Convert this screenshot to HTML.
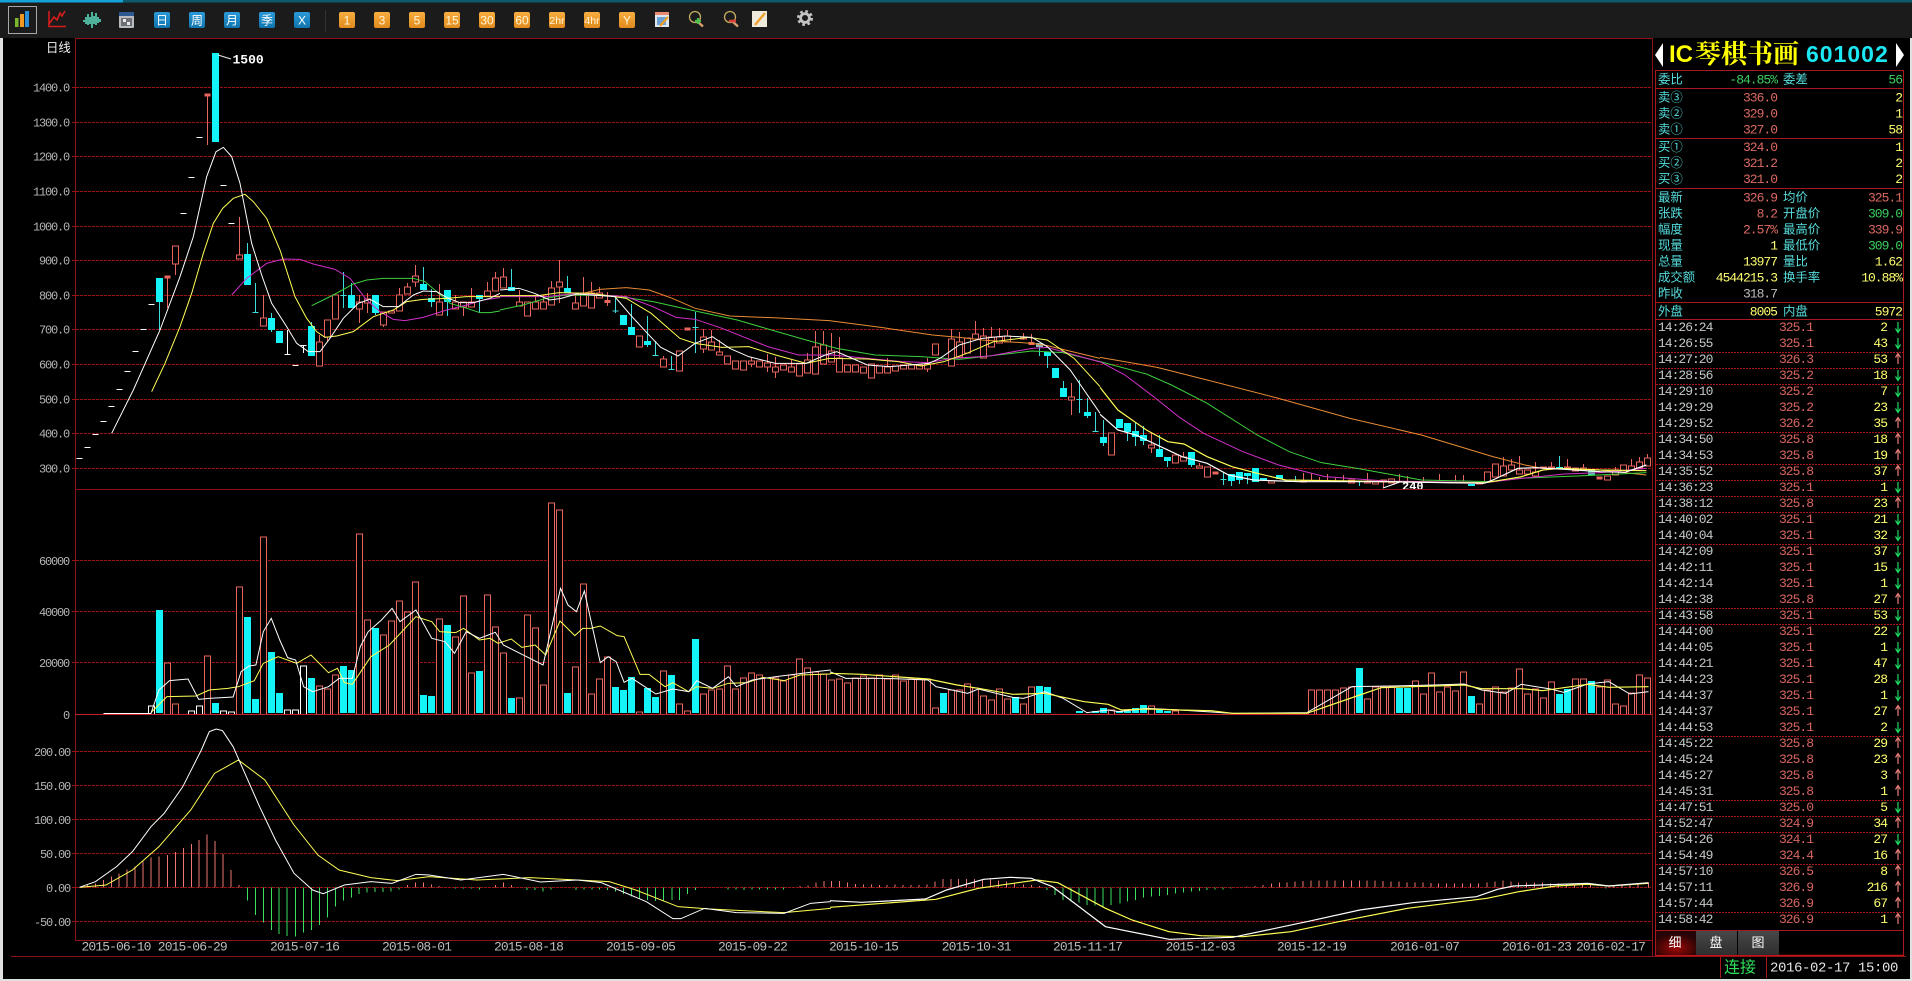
<!DOCTYPE html>
<html lang="zh"><head><meta charset="utf-8"><title>IC琴棋书画 601002</title>
<style>
html,body{margin:0;padding:0;background:#000;overflow:hidden}
svg{display:block}
path,polyline,line{vector-effect:non-scaling-stroke;fill:none}
.c path{shape-rendering:crispEdges}
text{white-space:pre}
.a{font:12px "Liberation Mono",monospace;letter-spacing:-1.2px;fill:#b4b4b4;text-anchor:end}
.dt{font:13px "Liberation Mono",monospace;letter-spacing:-.9px;fill:#bdbdbd}
.l{font:12.4px "Liberation Sans","Noto Sans CJK SC",sans-serif;fill:#55dcdc}
.m{font:13px "Liberation Mono",monospace;letter-spacing:-1px}
.e{text-anchor:end}
.s{fill:#dd6a64}.g{fill:#3cd060}.y{fill:#ffff70}.h{fill:#bdbdbd}
.t{font:13px "Liberation Mono",monospace;letter-spacing:-1px;fill:#c4c8c8}
.p{font:13px "Liberation Mono",monospace;letter-spacing:-1px;fill:#d86660}
.q{font:13px "Liberation Mono",monospace;letter-spacing:-1px;fill:#ffff70;text-anchor:end}
.tb{font:12px "Liberation Sans","Noto Sans CJK SC",sans-serif;fill:#fff;text-anchor:middle}
.gd{stroke:#9a1212;stroke-width:1;stroke-dasharray:3 1}
.rd{stroke:#a8181c;stroke-width:1}
</style></head><body>
<svg width="1912" height="981" viewBox="0 0 1912 981" xmlns="http://www.w3.org/2000/svg">
<defs>
<linearGradient id="bl" x1="0" y1="0" x2="0" y2="1"><stop offset="0" stop-color="#2a9ad8"/><stop offset="1" stop-color="#0f74ae"/></linearGradient>
<linearGradient id="or" x1="0" y1="0" x2="0" y2="1"><stop offset="0" stop-color="#f8ae40"/><stop offset="1" stop-color="#e08a1c"/></linearGradient>
<radialGradient id="rt" cx=".5" cy=".7" r=".6"><stop offset="0" stop-color="#a00606"/><stop offset="1" stop-color="#240404"/></radialGradient>
<linearGradient id="gt" x1="0" y1="0" x2="0" y2="1"><stop offset="0" stop-color="#484848"/><stop offset="1" stop-color="#2e2e2e"/></linearGradient>
<path id="d" d="M1898-5V5M1895.5 1.5L1898 5.5 1900.5 1.5" stroke="#22d864" stroke-width="1.2"/>
<path id="u" d="M1898 5V-5M1895.5-1.5L1898-5.5 1900.5-1.5" stroke="#e87c78" stroke-width="1.2"/>
</defs>
<rect width="1912" height="981" fill="#000"/>
<rect x="0" y="0" width="3" height="981" fill="#e0e0e0"/>
<rect x="1910" y="0" width="2" height="981" fill="#e0e0e0"/>
<rect x="0" y="979" width="1912" height="2" fill="#e0e0e0"/>
<!-- toolbar -->
<rect x="0" y="0" width="1912" height="38" fill="#1b1b1b"/>
<rect x="0" y="0" width="1912" height="2.5" fill="#0c5a6c"/>
<rect x="0" y="0" width="123" height="2.5" fill="#12a4d8"/>
<rect x="8.5" y="6.5" width="28" height="27" fill="none" stroke="#a8a8a8"/>
<rect x="15" y="18" width="3.5" height="9" fill="#7cb82c"/><rect x="20" y="14" width="4" height="13" fill="#f09a20"/><rect x="25" y="11" width="4" height="16" fill="#2a8ed8"/>
<path d="M49 11V26.5H66M49 24L54 17 57 20 60 13 62 16 65 11" stroke="#d41c1c" stroke-width="1.6"/>
<path d="M84 20v2M86 17v7M88 14v11M90 17v7M92 12v16M94 16v8M96 13v12M98 17v6M100 19v3" stroke="#5fe4c4" stroke-width="1.5"/>
<rect x="119" y="12" width="15" height="16" rx="1" fill="#b8bcc0"/><rect x="119" y="12" width="15" height="4" fill="#2c5a90"/><rect x="121" y="18" width="11" height="8" fill="#6c7074"/><rect x="123" y="19" width="3" height="3" fill="#e8e8e8"/><rect x="127" y="22" width="3" height="3" fill="#e8e8e8"/>
<g fill="url(#bl)"><rect x="154" y="12" width="16" height="16" rx="2"/><rect x="189" y="12" width="16" height="16" rx="2"/><rect x="224" y="12" width="16" height="16" rx="2"/><rect x="259" y="12" width="16" height="16" rx="2"/><rect x="294" y="12" width="16" height="16" rx="2"/></g>
<text class="tb" x="162" y="24.5">日</text><text class="tb" x="197" y="24.5">周</text><text class="tb" x="232" y="24.5">月</text><text class="tb" x="267" y="24.5">季</text><text class="tb" x="302" y="24.5">X</text>
<line x1="325.5" y1="10" x2="325.5" y2="32" stroke="#333"/>
<g fill="url(#or)"><rect x="339" y="12" width="16" height="16" rx="2"/><rect x="374" y="12" width="16" height="16" rx="2"/><rect x="409" y="12" width="16" height="16" rx="2"/><rect x="444" y="12" width="16" height="16" rx="2"/><rect x="479" y="12" width="16" height="16" rx="2"/><rect x="514" y="12" width="16" height="16" rx="2"/><rect x="549" y="12" width="16" height="16" rx="2"/><rect x="584" y="12" width="16" height="16" rx="2"/><rect x="619" y="12" width="16" height="16" rx="2"/></g>
<g class="tb" style="fill:#fff6d8"><text class="tb" x="347" y="24.5" style="fill:#fff6d8">1</text><text class="tb" x="382" y="24.5" style="fill:#fff6d8">3</text><text class="tb" x="417" y="24.5" style="fill:#fff6d8">5</text><text class="tb" x="452" y="24.5" style="fill:#fff6d8">15</text><text class="tb" x="487" y="24.5" style="fill:#fff6d8">30</text><text class="tb" x="522" y="24.5" style="fill:#fff6d8">60</text><text class="tb" x="557" y="24" style="fill:#fff6d8;font-size:10.5px">2hr</text><text class="tb" x="592" y="24" style="fill:#fff6d8;font-size:10.5px">4hr</text><text class="tb" x="627" y="24.5" style="fill:#fff6d8">Y</text></g>
<rect x="655" y="12" width="14" height="15" fill="#dfe6ee"/><rect x="655" y="12" width="14" height="3" fill="#e88a70"/><rect x="657" y="17" width="9" height="8" fill="#6ca0d8"/><path d="M660 26L668 17" stroke="#f0a020" stroke-width="2.2"/>
<circle cx="695" cy="17" r="5.5" fill="none" stroke="#c4ac60" stroke-width="1.3"/><path d="M698 22L703 26.5" stroke="#d4a070" stroke-width="2.4"/><path d="M695 21h6M698 18v6" stroke="#46c04a" stroke-width="2.2"/>
<circle cx="730" cy="17" r="5.5" fill="none" stroke="#c4ac60" stroke-width="1.3"/><path d="M733 22L738 26.5" stroke="#d4a070" stroke-width="2.4"/><path d="M729 21h7" stroke="#d8403c" stroke-width="2.6"/>
<rect x="752" y="11" width="15" height="16" fill="#eeeadc"/><path d="M755 25L765 13" stroke="#f0a030" stroke-width="2.4"/>
<circle cx="805" cy="18" r="6.6" fill="none" stroke="#c4c4c4" stroke-width="2.8" stroke-dasharray="2.6 2.6"/><circle cx="805" cy="18" r="4.4" fill="none" stroke="#c4c4c4" stroke-width="2.8"/>
<!-- grid -->
<line x1="75" y1="38.5" x2="1653" y2="38.5" stroke="#8a1418"/>
<line x1="75.5" y1="39" x2="75.5" y2="941" stroke="#8a1418"/>
<line x1="1652.5" y1="39" x2="1652.5" y2="956" stroke="#8a1418"/>
<path class="gd" d="M72 87.5H1652M72 122.5H1652M72 156.5H1652M72 191.5H1652M72 226.5H1652M72 260.5H1652M72 295.5H1652M72 329.5H1652M72 364.5H1652M72 399.5H1652M72 433.5H1652M72 468.5H1652M72 560.5H1652M72 611.5H1652M72 662.5H1652M72 751.5H1652M72 785.5H1652M72 819.5H1652M72 853.5H1652M72 887.5H1652M72 921.5H1652"/>
<path stroke="#8a1418" d="M75 489.5H1652M75 940.5H1653M11 956.5H1906"/>
<path stroke="#c02428" stroke-width="1" d="M75 714.5H1652"/>
<!-- axis labels -->
<text class="a" x="69" y="91.5">1400.0</text><text class="a" x="69" y="126.5">1300.0</text><text class="a" x="69" y="160.5">1200.0</text><text class="a" x="69" y="195.5">1100.0</text><text class="a" x="69" y="230.5">1000.0</text><text class="a" x="69" y="264.5">900.0</text><text class="a" x="69" y="299.5">800.0</text><text class="a" x="69" y="333.5">700.0</text><text class="a" x="69" y="368.5">600.0</text><text class="a" x="69" y="403.5">500.0</text><text class="a" x="69" y="437.5">400.0</text><text class="a" x="69" y="472.5">300.0</text>
<text class="a" x="69" y="565">60000</text><text class="a" x="69" y="616">40000</text><text class="a" x="69" y="667">20000</text><text class="a" x="69" y="719">0</text>
<text class="a" x="70" y="756">200.00</text><text class="a" x="70" y="790">150.00</text><text class="a" x="70" y="824">100.00</text><text class="a" x="70" y="858">50.00</text><text class="a" x="70" y="892">0.00</text><text class="a" x="70" y="926">-50.00</text>
<text x="46" y="52" style="font:12.4px 'Noto Sans CJK SC',sans-serif;fill:#f0f0f0">日线</text>
<text class="dt" x="81.5" y="950.5">2015-06-10</text><text class="dt" x="157.8" y="950.5">2015-06-29</text><text class="dt" x="270" y="950.5">2015-07-16</text><text class="dt" x="382" y="950.5">2015-08-01</text><text class="dt" x="494" y="950.5">2015-08-18</text><text class="dt" x="606" y="950.5">2015-09-05</text><text class="dt" x="718" y="950.5">2015-09-22</text><text class="dt" x="829" y="950.5">2015-10-15</text><text class="dt" x="941.7" y="950.5">2015-10-31</text><text class="dt" x="1053" y="950.5">2015-11-17</text><text class="dt" x="1165.6" y="950.5">2015-12-03</text><text class="dt" x="1277" y="950.5">2015-12-19</text><text class="dt" x="1390" y="950.5">2016-01-07</text><text class="dt" x="1502" y="950.5">2016-01-23</text><text class="dt" x="1576" y="950.5">2016-02-17</text>
<!-- candles: x = bar index -->
<g class="c" transform="translate(79.5 0) scale(8 1)">
<path stroke="#fff" stroke-width="1" d="M-.4 458.5h.8M.6 447.5h.8M1.6 434.5h.8M2.6 421.5h.8M3.6 406.5h.8M4.6 389.5h.8M5.6 371.5h.8M6.6 351.5h.8M7.6 329.5h.8M8.6 304.5h.8M12.6 213.5h.8M13.6 177.5h.8M14.6 137.5h.8M17.6 185.5h.8M18.6 223.5h.8M25.6 354.5h.8M26.6 365.5h.8M27.6 345.5h.8M26 330V354M28 345V353"/>
<path stroke="#e8665e" stroke-width="1" d="M11 277V308M12 264V275M16 95V145M20 217V255M23 295V318M30 335V342M31 337V341M35 295V323M36 293V313M38 325V327M40 288V295M41 283V287M42 265V287M45 284V302M47 295V302M48 307V316M49 288V302M51 282V296M52 272V278M53 268V277M55 290V302M57 295V302M58 295V302M59 281V288M60 260V303M62 295V303M63 277V293M64 282V293M65 287V293M66 292V306M73 356V359M78 329V337M78 349V353M79 330V342M80 340V352M84 357V367M86 354V372M87 357V378M89 360V367M91 353V360M92 331V347M93 331V345M94 333V351M95 337V358M101 358V367M106 358V372M109 329V339M110 332V342M112 321V334M113 328V336M114 327V337M115 328V337M116 330V336M118 333V340M119 334V342M124 383V415M134 433V453M138 452V457M140 463V466M153 473V481M154 473V481M155 477V481M156 474V481M157 478V481M158 475V481M161 473V481M163 480V488M165 474V481M166 476V481M168 477V481M170 474V481M172 475V481M173 475V481M178 457V466M179 459V465M180 456V470M182 462V472M184 462V467M186 459V467M188 464V468M192 467V470M194 459V466M195 457V462M196 454V458"/>
<path stroke="#e8665e" stroke-width="3" d="M10.6 277h.8M15.6 95h.8M65.6 301.5h.8M75.6 329h.8M118.6 343.5h.8M141.6 473h.8M189.6 478h.8"/>
<path fill-rule="nonzero" style="fill:#000" stroke="#e8665e" stroke-width="1" d="M11.6 246h.8V264h-.8zM19.6 255h.8V259h-.8zM22.6 318h.8V326h-.8zM29.6 342h.8V366h-.8zM30.6 320h.8V337h-.8zM31.6 295h.8V319h-.8zM34.6 302h.8V309h-.8zM35.6 299h.8V303h-.8zM37.6 312h.8V325h-.8zM38.6 311h.8V313h-.8zM39.6 295h.8V311h-.8zM40.6 287h.8V294h-.8zM41.6 276h.8V282h-.8zM44.6 302h.8V315h-.8zM46.6 302h.8V309h-.8zM47.6 302h.8V307h-.8zM48.6 302h.8V307h-.8zM50.6 291h.8V296h-.8zM51.6 278h.8V291h-.8zM52.6 277h.8V288h-.8zM54.6 302h.8V306h-.8zM55.6 302h.8V316h-.8zM56.6 302h.8V309h-.8zM57.6 302h.8V309h-.8zM58.6 288h.8V305h-.8zM59.6 282h.8V287h-.8zM61.6 303h.8V309h-.8zM62.6 293h.8V306h-.8zM63.6 293h.8V308h-.8zM64.6 293h.8V298h-.8zM69.6 336h.8V347h-.8zM72.6 359h.8V367h-.8zM74.6 351h.8V371h-.8zM77.6 337h.8V349h-.8zM78.6 342h.8V350h-.8zM79.6 352h.8V355h-.8zM80.6 356h.8V364h-.8zM81.6 361h.8V369h-.8zM82.6 361h.8V370h-.8zM83.6 361h.8V364h-.8zM84.6 361h.8V367h-.8zM85.6 363h.8V367h-.8zM86.6 367h.8V372h-.8zM87.6 365h.8V370h-.8zM88.6 367h.8V372h-.8zM89.6 364h.8V376h-.8zM90.6 360h.8V373h-.8zM91.6 347h.8V374h-.8zM92.6 345h.8V364h-.8zM93.6 351h.8V362h-.8zM94.6 358h.8V372h-.8zM95.6 365h.8V372h-.8zM96.6 365h.8V372h-.8zM97.6 367h.8V373h-.8zM98.6 364h.8V378h-.8zM99.6 366h.8V373h-.8zM100.6 367h.8V373h-.8zM101.6 366h.8V371h-.8zM102.6 365h.8V369h-.8zM103.6 365h.8V369h-.8zM104.6 365h.8V369h-.8zM105.6 364h.8V369h-.8zM106.6 344h.8V355h-.8zM108.6 339h.8V366h-.8zM109.6 342h.8V357h-.8zM110.6 338h.8V353h-.8zM111.6 334h.8V339h-.8zM112.6 336h.8V358h-.8zM113.6 337h.8V347h-.8zM114.6 337h.8V343h-.8zM115.6 336h.8V342h-.8zM117.6 337h.8V339h-.8zM123.6 397h.8V400h-.8zM128.6 433h.8V455h-.8zM133.6 445h.8V448h-.8zM136.6 455h.8V463h-.8zM137.6 457h.8V461h-.8zM139.6 466h.8V468h-.8zM140.6 467h.8V477h-.8zM148.6 481h.8V483h-.8zM152.6 481h.8V482h-.8zM158.6 480h.8V483h-.8zM160.6 481h.8V483h-.8zM161.6 482h.8V484h-.8zM162.6 480h.8V482h-.8zM163.6 479h.8V483h-.8zM174.6 483h.8V484h-.8zM175.6 472h.8V482h-.8zM176.6 464h.8V477h-.8zM177.6 466h.8V476h-.8zM178.6 465h.8V470h-.8zM179.6 470h.8V474h-.8zM180.6 470h.8V474h-.8zM181.6 472h.8V476h-.8zM182.6 467h.8V468h-.8zM183.6 467h.8V468h-.8zM185.6 467h.8V468h-.8zM186.6 468h.8V471h-.8zM187.6 468h.8V470h-.8zM190.6 476h.8V480h-.8zM191.6 470h.8V475h-.8zM192.6 465h.8V472h-.8zM193.6 466h.8V470h-.8zM194.6 462h.8V468h-.8zM195.6 458h.8V466h-.8z"/>
<path stroke="#3fdcdc" stroke-width="1" d="M10 302V330M21 243V254M22 283V312M24 313V318M24 330V332M29 322V326M33 272V308M34 283V295M37 313V315M43 267V284M44 289V307M46 302V316M50 299V313M54 269V287M61 276V288M67 298V313M69 304V327M71 316V347M72 341V355M74 356V369M77 312V353M120 347V356M121 356V368M123 381V388M125 380V413M126 398V418M127 412V431M128 420V446M131 432V441M132 422V446M133 426V445M135 435V449M136 461V467M139 465V467M143 473V485M144 481V486M145 480V484M146 476V484M152 476V481M160 481V486M185 456V467M21.6 312.5h.8M32.6 295.5h.8M66.6 311h.8M71.6 355.5h.8M73.6 369.5h.8M76.6 327.5h.8M116.6 336.5h.8M124.6 399.5h.8M126.6 431.5h.8M142.6 479.5h.8M150.6 481.5h.8M151.6 481.5h.8"/>
<path stroke="#14f4f8" stroke-width="7" d="M10 278V302M17 53V142M21 254V285M24 318V330M25 331V343M29 326V356M34 295V308M37 295V313M43 284V290M44 298V302M46 290V302M50 295V299M54 287V291M61 288V293M68 315V325M69 327V335M71 341V345M121 352V356M122 368V378M123 388V397M126 412V416M128 437V443M130 419V428M131 423V432M132 431V437M133 435V441M135 449V457M136 457V461M139 452V465M144 474V481M145 472V480M146 473V476M147 468V482M148 478V480M150 475V479M174 484V486M185 467V469"/>
<path stroke="#8ab4b8" stroke-width="7" d="M120 343V347"/>
<path stroke="#30e8a0" stroke-width="7" d="M189 469V475"/>
</g>
<!-- moving averages -->
<g stroke-width="1">
<g transform="translate(0 30) scale(.33333)">
<polyline stroke="#d030c8" points="695,795 740,745 800,700 850,687 900,688 940,702 1005,718 1050,745 1100,810 1140,845 1180,868 1215,872 1270,862 1340,840 1400,825 1450,810 1500,803"/>
<polyline stroke="#3ecf3e" points="935,827 1000,795 1060,762 1100,750 1150,745 1240,745 1275,755 1310,785 1350,820 1400,835 1440,848 1470,848 1500,843"/>
<polyline stroke="#ffff55" points="455,1085 495,1000 540,890 575,790 610,670 640,580 668,535 700,505 735,493 760,515 800,565 840,660 885,800 920,865 950,905 975,922 1010,918 1060,905 1120,860 1180,840 1220,815 1270,808 1340,805 1400,800 1500,800"/>
<polyline stroke="#fff" points="335,1210 400,1080 480,900 540,740 580,620 620,440 648,365 670,352 695,380 720,460 755,640 785,735 815,820 860,890 890,940 925,965 960,965 990,925 1030,865 1075,820 1110,808 1150,830 1195,830 1240,795 1270,783 1310,785 1345,805 1380,818 1420,818 1470,805 1500,790"/>
</g>
<g transform="translate(500 230) scale(.3827 .33333)">
<polyline stroke="#e98b35" points="200,195 260,178 330,173 390,180 450,205 510,235 600,258 730,264 860,272 1000,293 1130,315 1200,322 1260,330 1390,340 1430,347 1568,385"/>
<polyline stroke="#3ecf3e" points="0,240 60,225 120,205 170,195 300,197 400,215 510,243 620,270 700,297 800,330 880,355 980,375 1100,380 1200,388 1300,375 1390,363 1470,368 1568,395"/>
<polyline stroke="#d030c8" points="0,200 120,200 200,190 330,200 400,230 460,262 510,268 580,295 700,350 780,375 870,375 960,385 1050,395 1120,398 1180,385 1280,378 1390,355 1430,352 1568,396"/>
<polyline stroke="#ffff55" points="0,197 100,197 155,188 240,190 330,205 395,250 470,325 510,340 580,352 650,350 720,375 800,400 860,385 960,387 1040,395 1100,408 1160,395 1220,370 1290,335 1380,322 1430,330 1500,385 1568,470"/>
<polyline stroke="#fff" points="0,180 50,175 90,190 130,210 160,205 200,192 300,200 345,260 385,310 420,352 465,378 510,340 555,320 600,355 650,380 720,400 800,400 850,375 880,365 960,405 1020,410 1120,400 1150,385 1200,345 1260,325 1320,318 1390,322 1430,350 1490,420 1568,550"/>
</g>
<g transform="translate(1100 300) scale(.35714 .33333)">
<polyline stroke="#e98b35" points="0,172 160,202 300,240 500,295 700,355 900,405 1100,470 1190,495 1240,505 1400,510 1530,525"/>
<polyline stroke="#3ecf3e" points="0,185 130,222 200,255 300,310 440,405 530,455 620,488 720,505 900,540 1090,545 1170,535 1360,527 1530,518"/>
<polyline stroke="#d030c8" points="0,185 70,225 150,290 220,350 290,400 400,455 500,495 630,530 800,543 1080,548 1180,535 1300,522 1400,518 1530,505"/>
<polyline stroke="#ffff55" stroke-width="1.2" points="0,262 50,330 130,390 190,425 235,432 300,470 370,500 440,520 520,540 700,543 1000,548 1080,548 1180,530 1240,510 1290,505 1400,510 1530,512"/>
<polyline stroke="#fff" stroke-width="1.2" points="0,343 50,390 100,405 170,440 230,470 300,490 360,525 430,540 560,545 800,545 1075,550 1100,540 1170,505 1220,503 1300,508 1400,515 1470,517 1530,495"/>
</g>
</g>
<!-- price marks -->
<path stroke="#e8e8e8" d="M218 55L231 59"/>
<text x="232.5" y="63.5" style="font:bold 13px 'Liberation Mono',monospace;fill:#fff">1500</text>
<path stroke="#fff" stroke-width="1" d="M1383 488L1400 482"/>
<text x="1402" y="490" style="font:bold 12px 'Liberation Mono',monospace;fill:#fff">240</text>
<rect x="1380" y="490" width="60" height="10" fill="#000"/>
<path stroke="#8a1418" d="M1380 489.5H1440"/>
<!-- volume bars -->
<g class="c" transform="translate(79.5 0) scale(8 1)">
<path style="fill:#000" stroke="#e8665e" stroke-width="1" d="M10.6 714V663h.8V714M11.6 714V704h.8V714M15.6 714V656h.8V714M19.6 714V587h.8V714M22.6 714V537h.8V714M29.6 714V686h.8V714M30.6 714V689h.8V714M31.6 714V675h.8V714M34.6 714V534h.8V714M35.6 714V620h.8V714M37.6 714V635h.8V714M38.6 714V621h.8V714M39.6 714V601h.8V714M40.6 714V612h.8V714M41.6 714V582h.8V714M44.6 714V619h.8V714M46.6 714V637h.8V714M47.6 714V596h.8V714M48.6 714V673h.8V714M50.6 714V595h.8V714M51.6 714V627h.8V714M52.6 714V653h.8V714M54.6 714V698h.8V714M55.6 714V615h.8V714M56.6 714V628h.8V714M57.6 714V685h.8V714M58.6 714V503h.8V714M59.6 714V510h.8V714M61.6 714V667h.8V714M62.6 714V584h.8V714M63.6 714V694h.8V714M64.6 714V679h.8V714M65.6 714V657h.8V714M69.6 714V712h.8V714M72.6 714V671h.8V714M74.6 714V704h.8V714M75.6 714V711h.8V714M77.6 714V694h.8V714M78.6 714V690h.8V714M79.6 714V689h.8V714M80.6 714V666h.8V714M81.6 714V689h.8V714M82.6 714V678h.8V714M83.6 714V673h.8V714M84.6 714V675h.8V714M85.6 714V678h.8V714M86.6 714V678h.8V714M87.6 714V681h.8V714M88.6 714V675h.8V714M89.6 714V659h.8V714M90.6 714V668h.8V714M91.6 714V672h.8V714M92.6 714V674h.8V714M93.6 714V680h.8V714M94.6 714V679h.8V714M95.6 714V683h.8V714M96.6 714V678h.8V714M97.6 714V676h.8V714M98.6 714V678h.8V714M99.6 714V675h.8V714M100.6 714V679h.8V714M101.6 714V675h.8V714M102.6 714V681h.8V714M103.6 714V679h.8V714M104.6 714V679h.8V714M105.6 714V679h.8V714M106.6 714V708h.8V714M108.6 714V690h.8V714M109.6 714V690h.8V714M110.6 714V684h.8V714M111.6 714V688h.8V714M112.6 714V696h.8V714M113.6 714V700h.8V714M114.6 714V689h.8V714M115.6 714V699h.8V714M117.6 714V704h.8V714M118.6 714V687h.8V714M128.6 714V710h.8V714M133.6 714V706h.8V714M136.6 714V711h.8V714M153.6 714V690h.8V714M154.6 714V690h.8V714M155.6 714V690h.8V714M156.6 714V690h.8V714M157.6 714V688h.8V714M158.6 714V687h.8V714M160.6 714V699h.8V714M161.6 714V687h.8V714M162.6 714V687h.8V714M163.6 714V687h.8V714M166.6 714V681h.8V714M167.6 714V694h.8V714M168.6 714V673h.8V714M169.6 714V692h.8V714M170.6 714V687h.8V714M171.6 714V691h.8V714M172.6 714V672h.8V714M174.6 714V704h.8V714M175.6 714V690h.8V714M176.6 714V687h.8V714M177.6 714V692h.8V714M178.6 714V688h.8V714M179.6 714V669h.8V714M180.6 714V694h.8V714M181.6 714V689h.8V714M182.6 714V698h.8V714M183.6 714V682h.8V714M186.6 714V679h.8V714M187.6 714V679h.8V714M189.6 714V687h.8V714M190.6 714V680h.8V714M191.6 714V704h.8V714M192.6 714V706h.8V714M193.6 714V693h.8V714M194.6 714V675h.8V714M195.6 714V678h.8V714"/>
<path stroke="#14f4f8" stroke-width="7" d="M10 713V610M17 713V703M21 713V617M22 713V699M24 713V652M25 713V693M29 713V678M33 713V666M34 713V670M37 713V628M43 713V695M44 713V696M46 713V625M50 713V671M54 713V698M61 713V693M67 713V687M68 713V690M69 713V677M71 713V688M72 713V697M74 713V675M77 713V639M108 713V693M117 713V697M120 713V686M121 713V687M125 713V711M127 713V711M128 713V708M130 713V711M131 713V711M132 713V708M133 713V705M135 713V710M136 713V711M160 713V668M165 713V688M166 713V688M174 713V696M185 713V694M186 713V689M189 713V681"/>
<path stroke="#fff" stroke-width="1" d="M8.6 714V706h.8V714M13.6 714V711h.8V714M14.6 714V706h.8V714M17.6 714V711h.8V714M18.6 714V712h.8V714M25.6 714V710h.8V714M26.6 714V710h.8V714M27.6 714V666h.8V714M3 713.5H9"/>
</g>
<g stroke-width="1">
<g transform="translate(0 490) scale(.5298 .33333)">
<polyline stroke="#ffff55" points="285,668 315,620 370,618 395,600 430,595 450,590 480,572 497,520 525,500 560,520 587,495 620,548 637,535 650,578 665,583 700,500 735,465 785,380 815,395 830,425 860,428 875,415 905,450 925,445 940,460 965,447 985,472 1010,465 1030,495 1057,393 1085,437 1100,415 1115,415 1133,408 1165,437 1178,440 1208,553 1225,553 1255,590 1270,578 1300,605 1315,590 1345,595 1375,580 1410,578 1440,562 1480,572 1510,555 1568,552"/>
<polyline stroke="#fff" points="285,670 300,600 320,572 355,567 375,628 395,625 440,621 455,545 470,528 483,525 497,425 512,385 528,450 543,503 558,510 573,590 590,605 620,590 640,565 665,565 680,470 695,425 720,390 740,355 755,395 785,360 815,445 840,455 858,490 880,425 905,445 935,427 950,465 1000,505 1025,525 1058,295 1072,345 1088,365 1103,303 1133,518 1148,500 1163,515 1178,577 1193,565 1238,612 1270,597 1300,605 1315,572 1345,595 1375,560 1390,590 1420,570 1465,560 1540,545 1568,540"/>
</g>
<g transform="translate(830 490) scale(.5298 .33333)">
<polyline stroke="#fff" points="0,545 30,565 100,565 185,570 200,590 260,610 280,597 345,622 365,625 405,605 440,625 485,668 525,660 545,665 600,655 660,660 760,670 900,668 985,590 1060,588 1140,585 1197,582 1230,600 1275,610 1305,583 1360,597 1385,607 1430,582 1470,575 1510,612 1545,605"/>
<polyline stroke="#ffff55" stroke-width="1.2" points="0,550 60,553 185,567 240,585 280,595 345,613 405,610 480,635 525,643 550,660 600,657 660,660 720,662 760,670 900,670 1000,615 1040,593 1140,588 1197,585 1230,596 1305,596 1345,602 1430,583 1470,592 1545,590"/>
</g>
</g>
<!-- MACD -->
<g class="c" transform="translate(0 730) scale(.5298 .33333)">
<path stroke="#ee7870" stroke-width="1" d="M165 472V465M180 472V460M195 472V450M210 472V440M225 472V430M240 472V418M255 472V410M270 472V395M285 472V383M300 472V380M316 472V375M331 472V366M346 472V354M361 472V342M376 472V330M391 472V313M406 472V333M421 472V372M436 472V420M451 472V465M769 472V465M784 472V458M799 472V458M814 472V464M829 472V468M935 472V465M950 472V458M965 472V465M1510 472V468M1525 472V466M1540 472V458M1555 472V453"/>
<path stroke="#3ce060" stroke-width="1" d="M467 472V512M482 472V555M497 472V578M512 472V600M527 472V612M542 472V618M558 472V620M573 472V608M588 472V600M603 472V585M618 472V562M633 472V530M648 472V512M663 472V503M678 472V492M693 472V488M708 472V486M723 472V486M738 472V484M753 472V478M860 472V476M875 472V476M890 472V476M905 472V479M995 472V480M1010 472V480M1025 472V484M1040 472V478M1087 472V480M1102 472V478M1117 472V478M1132 472V478M1147 472V480M1162 472V485M1177 472V492M1192 472V500M1207 472V505M1222 472V510M1237 472V513M1252 472V513M1268 472V510M1283 472V510M1298 472V492M1313 472V480M1374 472V478M1389 472V478M1404 472V480M1419 472V478M1434 472V478M1449 472V478M1464 472V478M1479 472V478"/>
</g>
<g class="c" transform="translate(830 730) scale(.5298 .33333)">
<path stroke="#ee7870" stroke-width="1" d="M3 472V453M18 472V453M33 472V458M48 472V462M63 472V463M78 472V463M93 472V465M108 472V465M123 472V463M138 472V465M153 472V465M168 472V465M183 472V463M198 472V455M213 472V447M228 472V447M243 472V447M258 472V447M273 472V447M288 472V447M303 472V449M318 472V452M333 472V455M348 472V460M365 472V463M380 472V465M395 472V468M787 472V470M802 472V468M817 472V465M833 472V460M848 472V458M863 472V457M878 472V455M893 472V453M908 472V452M923 472V452M938 472V452M953 472V452M969 472V452M984 472V452M999 472V452M1014 472V452M1029 472V452M1044 472V453M1059 472V455M1074 472V455M1089 472V457M1104 472V458M1119 472V458M1134 472V459M1149 472V460M1164 472V460M1179 472V460M1194 472V460M1209 472V460M1224 472V460M1240 472V458M1255 472V455M1270 472V452M1285 472V455M1300 472V457M1315 472V458M1330 472V458M1345 472V458M1360 472V460M1375 472V460M1390 472V462M1405 472V463M1420 472V465M1435 472V465M1480 472V465M1495 472V463M1510 472V463M1525 472V460M1545 472V458"/>
<path stroke="#3ce060" stroke-width="1" d="M410 472V480M425 472V495M440 472V510M455 472V515M470 472V517M485 472V525M500 472V527M515 472V530M530 472V525M547 472V520M562 472V515M577 472V510M592 472V502M607 472V500M622 472V498M637 472V495M652 472V490M667 472V488M682 472V485M697 472V483M712 472V480M727 472V478M742 472V478M757 472V475M1465 472V475"/>
</g>
<g transform="translate(0 730) scale(.5298 .33333)">
<polyline stroke="#ffff55" stroke-width="1" points="150,472 200,465 250,420 300,350 360,240 405,130 450,90 500,150 555,285 600,375 640,420 700,443 750,452 810,440 900,450 1000,443 1150,455 1200,480 1280,530 1340,537 1480,548 1568,535"/>
<polyline stroke="#fff" stroke-width="1" points="150,472 180,455 220,410 250,365 285,290 310,250 345,170 380,60 395,5 408,-3 420,2 440,50 465,140 490,230 520,330 555,430 590,480 610,491 650,465 700,455 740,460 785,433 810,435 870,450 950,433 1020,456 1090,450 1135,458 1220,515 1270,566 1285,566 1330,535 1390,548 1480,550 1530,520 1568,515"/>
</g>
<g transform="translate(830 730) scale(.5298 .33333)">
<polyline stroke="#ffff55" stroke-width="1.2" points="0,532 200,508 280,475 390,450 430,458 520,535 570,570 640,605 700,617 780,620 870,605 960,575 1090,535 1240,505 1300,485 1370,468 1430,463 1470,468 1545,460"/>
<polyline stroke="#fff" stroke-width="1.2" points="0,512 60,517 180,507 220,480 290,448 340,442 380,445 420,470 470,530 520,590 640,628 760,622 900,575 1000,540 1100,518 1220,500 1260,478 1290,468 1430,460 1470,468 1545,458"/>
</g>
<!-- right panel -->
<polygon points="1663,43 1655,55 1663,67" fill="#fff"/><polygon points="1896,43 1904,55 1896,67" fill="#fff"/>
<text x="1669" y="62" style="font:bold 24px 'Liberation Sans',sans-serif;fill:#ffff00">IC</text>
<text x="1695" y="63" style="font:bold 26px 'Noto Serif CJK SC',serif;fill:#ffff00">琴棋书画</text>
<text x="1806" y="62" style="font:bold 23px 'Liberation Sans',sans-serif;fill:#1ce8f4;letter-spacing:1px">601002</text>
<path class="rd" d="M1655.5 70V955M1903.5 70V955M1655 70.5H1904M1655 88.5H1904M1655 138.5H1904M1655 188.5H1904M1655 302.5H1904M1655 319.5H1904M1655 930.5H1904"/>
<path stroke="#c01418" stroke-width="1.6" d="M1655 955.5H1904"/>
<text class="l" x="1658" y="83.5">委比</text><text class="m g e" x="1777" y="83.5">-84.85%</text><text class="l" x="1783" y="83.5">委差</text><text class="m g e" x="1902" y="83.5">56</text>
<text class="l" x="1658" y="101.5">卖③</text><text class="m s e" x="1777" y="101.5">336.0</text><text class="m y e" x="1902" y="101.5">2</text>
<text class="l" x="1658" y="117.5">卖②</text><text class="m s e" x="1777" y="117.5">329.0</text><text class="m y e" x="1902" y="117.5">1</text>
<text class="l" x="1658" y="133.5">卖①</text><text class="m s e" x="1777" y="133.5">327.0</text><text class="m y e" x="1902" y="133.5">58</text>
<text class="l" x="1658" y="151">买①</text><text class="m s e" x="1777" y="151">324.0</text><text class="m y e" x="1902" y="151">1</text>
<text class="l" x="1658" y="167">买②</text><text class="m s e" x="1777" y="167">321.2</text><text class="m y e" x="1902" y="167">2</text>
<text class="l" x="1658" y="183">买③</text><text class="m s e" x="1777" y="183">321.0</text><text class="m y e" x="1902" y="183">2</text>
<text class="l" x="1658" y="201.5">最新</text><text class="m s e" x="1777" y="201.5">326.9</text><text class="l" x="1783" y="201.5">均价</text><text class="m s e" x="1902" y="201.5">325.1</text>
<text class="l" x="1658" y="217.5">张跌</text><text class="m s e" x="1777" y="217.5">8.2</text><text class="l" x="1783" y="217.5">开盘价</text><text class="m g e" x="1902" y="217.5">309.0</text>
<text class="l" x="1658" y="233.5">幅度</text><text class="m s e" x="1777" y="233.5">2.57%</text><text class="l" x="1783" y="233.5">最高价</text><text class="m s e" x="1902" y="233.5">339.9</text>
<text class="l" x="1658" y="249.5">现量</text><text class="m y e" x="1777" y="249.5">1</text><text class="l" x="1783" y="249.5">最低价</text><text class="m g e" x="1902" y="249.5">309.0</text>
<text class="l" x="1658" y="265.5">总量</text><text class="m y e" x="1777" y="265.5">13977</text><text class="l" x="1783" y="265.5">量比</text><text class="m y e" x="1902" y="265.5">1.62</text>
<text class="l" x="1658" y="281.5">成交额</text><text class="m y e" x="1777" y="281.5">4544215.3</text><text class="l" x="1783" y="281.5">换手率</text><text class="m y e" x="1902" y="281.5">10.88%</text>
<text class="l" x="1658" y="297.5">昨收</text><text class="m h e" x="1777" y="297.5">318.7</text>
<text class="l" x="1658" y="315.5">外盘</text><text class="m y e" x="1777" y="315.5">8005</text><text class="l" x="1783" y="315.5">内盘</text><text class="m y e" x="1902" y="315.5">5972</text>
<!-- tick separators -->
<path stroke="#a8181c" stroke-dasharray="2 1" d="M1656 352.5H1903M1656 368.5H1903M1656 384.5H1903M1656 432.5H1903M1656 464.5H1903M1656 480.5H1903M1656 496.5H1903M1656 512.5H1903M1656 544.5H1903M1656 608.5H1903M1656 624.5H1903M1656 736.5H1903M1656 800.5H1903M1656 816.5H1903M1656 832.5H1903M1656 864.5H1903M1656 912.5H1903"/>
<text class="t" x="1658" y="331">14:26:24</text><text class="p" x="1779" y="331">325.1</text><text class="q" x="1887" y="331">2</text><use href="#d" y="327"/>
<text class="t" x="1658" y="347">14:26:55</text><text class="p" x="1779" y="347">325.1</text><text class="q" x="1887" y="347">43</text><use href="#d" y="343"/>
<text class="t" x="1658" y="363">14:27:20</text><text class="p" x="1779" y="363">326.3</text><text class="q" x="1887" y="363">53</text><use href="#u" y="359"/>
<text class="t" x="1658" y="379">14:28:56</text><text class="p" x="1779" y="379">325.2</text><text class="q" x="1887" y="379">18</text><use href="#d" y="375"/>
<text class="t" x="1658" y="395">14:29:10</text><text class="p" x="1779" y="395">325.2</text><text class="q" x="1887" y="395">7</text><use href="#d" y="391"/>
<text class="t" x="1658" y="411">14:29:29</text><text class="p" x="1779" y="411">325.2</text><text class="q" x="1887" y="411">23</text><use href="#d" y="407"/>
<text class="t" x="1658" y="427">14:29:52</text><text class="p" x="1779" y="427">326.2</text><text class="q" x="1887" y="427">35</text><use href="#u" y="423"/>
<text class="t" x="1658" y="443">14:34:50</text><text class="p" x="1779" y="443">325.8</text><text class="q" x="1887" y="443">18</text><use href="#u" y="439"/>
<text class="t" x="1658" y="459">14:34:53</text><text class="p" x="1779" y="459">325.8</text><text class="q" x="1887" y="459">19</text><use href="#u" y="455"/>
<text class="t" x="1658" y="475">14:35:52</text><text class="p" x="1779" y="475">325.8</text><text class="q" x="1887" y="475">37</text><use href="#u" y="471"/>
<text class="t" x="1658" y="491">14:36:23</text><text class="p" x="1779" y="491">325.1</text><text class="q" x="1887" y="491">1</text><use href="#d" y="487"/>
<text class="t" x="1658" y="507">14:38:12</text><text class="p" x="1779" y="507">325.8</text><text class="q" x="1887" y="507">23</text><use href="#u" y="503"/>
<text class="t" x="1658" y="523">14:40:02</text><text class="p" x="1779" y="523">325.1</text><text class="q" x="1887" y="523">21</text><use href="#d" y="519"/>
<text class="t" x="1658" y="539">14:40:04</text><text class="p" x="1779" y="539">325.1</text><text class="q" x="1887" y="539">32</text><use href="#d" y="535"/>
<text class="t" x="1658" y="555">14:42:09</text><text class="p" x="1779" y="555">325.1</text><text class="q" x="1887" y="555">37</text><use href="#d" y="551"/>
<text class="t" x="1658" y="571">14:42:11</text><text class="p" x="1779" y="571">325.1</text><text class="q" x="1887" y="571">15</text><use href="#d" y="567"/>
<text class="t" x="1658" y="587">14:42:14</text><text class="p" x="1779" y="587">325.1</text><text class="q" x="1887" y="587">1</text><use href="#d" y="583"/>
<text class="t" x="1658" y="603">14:42:38</text><text class="p" x="1779" y="603">325.8</text><text class="q" x="1887" y="603">27</text><use href="#u" y="599"/>
<text class="t" x="1658" y="619">14:43:58</text><text class="p" x="1779" y="619">325.1</text><text class="q" x="1887" y="619">53</text><use href="#d" y="615"/>
<text class="t" x="1658" y="635">14:44:00</text><text class="p" x="1779" y="635">325.1</text><text class="q" x="1887" y="635">22</text><use href="#d" y="631"/>
<text class="t" x="1658" y="651">14:44:05</text><text class="p" x="1779" y="651">325.1</text><text class="q" x="1887" y="651">1</text><use href="#d" y="647"/>
<text class="t" x="1658" y="667">14:44:21</text><text class="p" x="1779" y="667">325.1</text><text class="q" x="1887" y="667">47</text><use href="#d" y="663"/>
<text class="t" x="1658" y="683">14:44:23</text><text class="p" x="1779" y="683">325.1</text><text class="q" x="1887" y="683">28</text><use href="#d" y="679"/>
<text class="t" x="1658" y="699">14:44:37</text><text class="p" x="1779" y="699">325.1</text><text class="q" x="1887" y="699">1</text><use href="#d" y="695"/>
<text class="t" x="1658" y="715">14:44:37</text><text class="p" x="1779" y="715">325.1</text><text class="q" x="1887" y="715">27</text><use href="#u" y="711"/>
<text class="t" x="1658" y="731">14:44:53</text><text class="p" x="1779" y="731">325.1</text><text class="q" x="1887" y="731">2</text><use href="#d" y="727"/>
<text class="t" x="1658" y="747">14:45:22</text><text class="p" x="1779" y="747">325.8</text><text class="q" x="1887" y="747">29</text><use href="#u" y="743"/>
<text class="t" x="1658" y="763">14:45:24</text><text class="p" x="1779" y="763">325.8</text><text class="q" x="1887" y="763">23</text><use href="#u" y="759"/>
<text class="t" x="1658" y="779">14:45:27</text><text class="p" x="1779" y="779">325.8</text><text class="q" x="1887" y="779">3</text><use href="#u" y="775"/>
<text class="t" x="1658" y="795">14:45:31</text><text class="p" x="1779" y="795">325.8</text><text class="q" x="1887" y="795">1</text><use href="#u" y="791"/>
<text class="t" x="1658" y="811">14:47:51</text><text class="p" x="1779" y="811">325.0</text><text class="q" x="1887" y="811">5</text><use href="#d" y="807"/>
<text class="t" x="1658" y="827">14:52:47</text><text class="p" x="1779" y="827">324.9</text><text class="q" x="1887" y="827">34</text><use href="#u" y="823"/>
<text class="t" x="1658" y="843">14:54:26</text><text class="p" x="1779" y="843">324.1</text><text class="q" x="1887" y="843">27</text><use href="#d" y="839"/>
<text class="t" x="1658" y="859">14:54:49</text><text class="p" x="1779" y="859">324.4</text><text class="q" x="1887" y="859">16</text><use href="#u" y="855"/>
<text class="t" x="1658" y="875">14:57:10</text><text class="p" x="1779" y="875">326.5</text><text class="q" x="1887" y="875">8</text><use href="#u" y="871"/>
<text class="t" x="1658" y="891">14:57:11</text><text class="p" x="1779" y="891">326.9</text><text class="q" x="1887" y="891">216</text><use href="#u" y="887"/>
<text class="t" x="1658" y="907">14:57:44</text><text class="p" x="1779" y="907">326.9</text><text class="q" x="1887" y="907">67</text><use href="#u" y="903"/>
<text class="t" x="1658" y="923">14:58:42</text><text class="p" x="1779" y="923">326.9</text><text class="q" x="1887" y="923">1</text><use href="#u" y="919"/>
<!-- tabs -->
<rect x="1656" y="931" width="40" height="24" fill="url(#rt)"/>
<rect x="1696" y="931" width="41" height="24" fill="url(#gt)"/>
<rect x="1738" y="931" width="41" height="24" fill="url(#gt)"/>
<text class="tb" x="1675" y="947" style="font-size:13px">细</text><text class="tb" x="1716" y="947" style="font-size:13px">盘</text><text class="tb" x="1758" y="947" style="font-size:13px">图</text>
<!-- status -->
<path class="rd" d="M1720.5 957V978M1766.5 957V978"/>
<text x="1724" y="972.5" style="font:16px 'Noto Sans CJK SC',sans-serif;fill:#2ee05a">连接</text>
<text x="1770" y="971.5" style="font:14px 'Liberation Mono',monospace;letter-spacing:-.4px;fill:#e4e4e4">2016-02-17 15:00</text>
</svg>
</body></html>
